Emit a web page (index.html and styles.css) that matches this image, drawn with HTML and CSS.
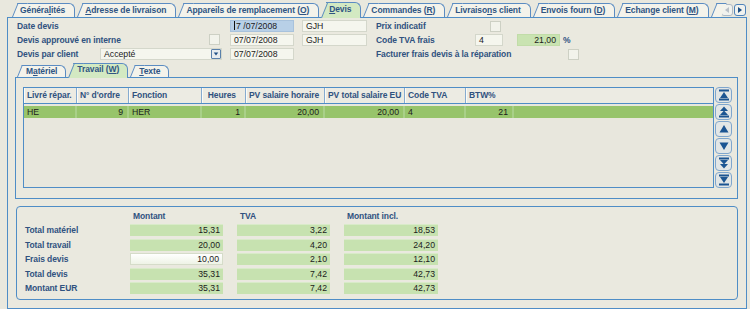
FILE: index.html
```html
<!DOCTYPE html>
<html lang="fr">
<head>
    <meta charset="UTF-8">
    <title>Devis</title>
    <link rel="stylesheet" href="styles.css">
</head>
<body>
<div class="window">
    <div class="tabbar">
        <div class="tab">Généra<u>l</u>ités</div>
        <div class="tab"><u>A</u>dresse de livraison</div>
        <div class="tab">Appareils de remplacement (<u>O</u>)</div>
        <div class="tab active"><u>D</u>evis</div>
        <div class="tab">Commandes (<u>R</u>)</div>
        <div class="tab">Livraiso<u>n</u>s client</div>
        <div class="tab">Envois fourn (<u>D</u>)</div>
        <div class="tab">Echange client (<u>M</u>)</div>
        <div class="tab stub"></div>
        <div class="tabnav">
            <span class="navbtn off"><svg viewBox="0 0 8 8" width="8" height="8"><path d="M6 1 L2 4 L6 7 Z"/></svg></span>
            <span class="navbtn"><svg viewBox="0 0 8 8" width="8" height="8"><path d="M2 1 L6 4 L2 7 Z"/></svg></span>
        </div>
    </div>

    <div class="panel">
        <!-- en-tête du devis -->
        <div class="form">
            <div class="lbl">Date devis</div>
            <div></div>
            <div class="input focus"><span class="caret"></span>7&nbsp;/07/2008</div>
            <div class="input">GJH</div>
            <div class="side">
                <span class="lbl w-prix">Prix indicatif</span>
                <span class="check"></span>
            </div>

            <div class="lbl">Devis approuvé en interne</div>
            <div class="cell-end"><span class="check"></span></div>
            <div class="input">07/07/2008</div>
            <div class="input">GJH</div>
            <div class="side">
                <span class="lbl w-tva">Code TVA frais</span>
                <span class="input w-code">4</span>
                <span class="input green w-rate">21,00</span>
                <span class="unit">%</span>
            </div>

            <div class="lbl">Devis par client</div>
            <div class="select">
                <span>Accepté</span>
                <span class="select-btn"><svg viewBox="0 0 8 8" width="6" height="6"><path d="M1 2 L7 2 L4 6 Z"/></svg></span>
            </div>
            <div class="input">07/07/2008</div>
            <div></div>
            <div class="side">
                <span class="lbl w-fact">Facturer frais devis à la réparation</span>
                <span class="check"></span>
            </div>
        </div>

        <div class="subtabbar">
            <div class="tab small">M<u>a</u>tériel</div>
            <div class="tab small active">Travail (<u>W</u>)</div>
            <div class="tab small"><u>T</u>exte</div>
        </div>

        <div class="subpanel">
            <div class="list">
                <div class="list-head">
                    <div>Livré répar.</div>
                    <div>N° d'ordre</div>
                    <div>Fonction</div>
                    <div class="r">Heures</div>
                    <div>PV salaire horaire</div>
                    <div>PV total salaire EU</div>
                    <div>Code TVA</div>
                    <div class="wide">BTW%</div>
                </div>
                <div class="list-row">
                    <div>HE</div>
                    <div class="r">9</div>
                    <div>HER</div>
                    <div class="r">1</div>
                    <div class="r">20,00</div>
                    <div class="r">20,00</div>
                    <div>4</div>
                    <div class="r">21</div>
                    <div></div>
                </div>
            </div>
            <div class="scroller">
                <span class="sbtn"><svg viewBox="0 0 12 12" width="12" height="12"><rect x="1" y="0.5" width="10" height="2"/><path d="M6 3 L10 9 L2 9 Z"/><rect x="1" y="9.5" width="10" height="2"/></svg></span>
                <span class="sbtn"><svg viewBox="0 0 12 12" width="12" height="12"><path d="M6 0.5 L10 5 L2 5 Z"/><path d="M6 4.5 L10 9 L2 9 Z"/><rect x="1" y="9.5" width="10" height="2"/></svg></span>
                <span class="sbtn"><svg viewBox="0 0 12 12" width="12" height="12"><path d="M6 2 L10.5 9.5 L1.5 9.5 Z"/></svg></span>
                <span class="sbtn"><svg viewBox="0 0 12 12" width="12" height="12"><path d="M1.5 2.5 L10.5 2.5 L6 10 Z"/></svg></span>
                <span class="sbtn"><svg viewBox="0 0 12 12" width="12" height="12"><rect x="1" y="0.5" width="10" height="2"/><path d="M2 3 L10 3 L6 7.5 Z"/><path d="M2 7 L10 7 L6 11.5 Z"/></svg></span>
                <span class="sbtn"><svg viewBox="0 0 12 12" width="12" height="12"><rect x="1" y="0.5" width="10" height="2"/><path d="M2 3 L10 3 L6 9 Z"/><rect x="1" y="9.5" width="10" height="2"/></svg></span>
            </div>
        </div>

        <!-- totaux -->
        <div class="totals">
            <div></div>
            <div class="col-head">Montant</div>
            <div class="col-head">TVA</div>
            <div class="col-head">Montant incl.</div>

            <div class="lbl">Total matériel</div>
            <div class="amount">15,31</div>
            <div class="amount">3,22</div>
            <div class="amount">18,53</div>

            <div class="lbl">Total travail</div>
            <div class="amount">20,00</div>
            <div class="amount">4,20</div>
            <div class="amount">24,20</div>

            <div class="lbl">Frais devis</div>
            <div class="amount edit">10,00</div>
            <div class="amount">2,10</div>
            <div class="amount">12,10</div>

            <div class="lbl">Total devis</div>
            <div class="amount">35,31</div>
            <div class="amount">7,42</div>
            <div class="amount">42,73</div>

            <div class="lbl">Montant EUR</div>
            <div class="amount">35,31</div>
            <div class="amount">7,42</div>
            <div class="amount">42,73</div>
        </div>
    </div>
</div>
</body>
</html>
```

FILE: styles.css
```css
* {
    margin: 0;
    padding: 0;
    box-sizing: border-box;
}

body {
    background-color: #e9e8de;
    font-family: "Liberation Sans", Arial, sans-serif;
    font-size: 8.7px;
    color: #1b1b1b;
    overflow: hidden;
}

.window {
    width: 750px;
    height: 309px;
    padding-top: 2px;
}

u {
    text-underline-offset: 1px;
}

/* onglets */
.tabbar {
    display: flex;
    align-items: flex-start;
    height: 16px;
    margin-bottom: -1px;
    padding: 0 4px 0 12px;
    position: relative;
    z-index: 1;
}

.tab {
    position: relative;
    z-index: 0;
    height: 14px;
    margin-top: 1px;
    margin-right: 2px;
    padding: 0 10px 0 8px;
    line-height: 14px;
    font-size: 8.5px;
    font-weight: bold;
    letter-spacing: -0.1px;
    color: #2f5583;
    white-space: nowrap;
}

.tab::before {
    content: "";
    position: absolute;
    z-index: -1;
    top: 0;
    bottom: 0;
    left: 5px;
    right: 0;
    background: #f4f3eb;
    border: 1px solid #5b8cc2;
    border-left: none;
    border-bottom: none;
    border-radius: 0 6px 0 0;
}

.tab::after {
    content: "";
    position: absolute;
    z-index: -1;
    top: 0;
    bottom: 0;
    left: 0;
    width: 9px;
    background: #f4f3eb;
    border-left: 1px solid #5b8cc2;
    border-top: 1px solid #5b8cc2;
    transform: skewX(-22deg);
    transform-origin: 0 100%;
}

.tab.active {
    height: 16px;
    margin-top: 0;
    line-height: 15px;
}

.tab.active::before,
.tab.active::after {
    background: #d3e9c2;
}

.tab.stub {
    width: 12px;
    padding: 0;
    margin-right: 0;
}

.tabnav {
    display: flex;
    gap: 1px;
    margin-left: auto;
    margin-top: 2px;
}

.navbtn {
    display: flex;
    align-items: center;
    justify-content: center;
    width: 12px;
    height: 12px;
    border: 1px solid #4f83ba;
    border-radius: 3px;
    background: #f1f2ee;
    fill: #1d4f86;
}

.navbtn.off {
    border-color: #aeb9c4;
    fill: #b9c0c7;
}

/* panneau principal */
.panel {
    height: 292px;
    margin: 0 3px 0 7px;
    border: 1px solid #4f8dc6;
    background: #eae9df;
}

.lbl {
    font-size: 8.5px;
    font-weight: bold;
    letter-spacing: -0.1px;
    color: #30527f;
    line-height: 12px;
    white-space: nowrap;
}

.form {
    display: grid;
    grid-template-columns: 75px 122px 64px 65px 1fr;
    grid-template-rows: repeat(3, 12px);
    column-gap: 8px;
    row-gap: 2px;
    padding: 2px 0 0 9px;
}

.input {
    display: block;
    height: 12px;
    padding: 0 3px;
    background: #f5f6ee;
    border: 1px solid #d4d7cb;
    line-height: 10px;
    white-space: nowrap;
}

.input.focus {
    background: #b8d0e7;
    border-color: #a8c2dc;
}

.caret {
    display: inline-block;
    width: 1px;
    height: 9px;
    margin-right: 1px;
    vertical-align: -1px;
    background: #111;
}

.input.green {
    background: #c9e3b1;
    border-color: #c1dca8;
    text-align: right;
}

.check {
    display: block;
    width: 11px;
    height: 11px;
    background: #f2f3eb;
    border: 1px solid #cdd0c4;
}

.cell-end {
    display: flex;
    justify-content: flex-end;
    padding-right: 2px;
}

.select {
    display: flex;
    align-items: center;
    justify-content: space-between;
    height: 12px;
    padding: 0 0 0 3px;
    background: #f5f6ee;
    border: 1px solid #d4d7cb;
}

.select-btn {
    display: flex;
    align-items: center;
    justify-content: center;
    width: 10px;
    height: 10px;
    border: 1px solid #5a80ab;
    border-radius: 1px;
    background: #e7ecef;
    fill: #1f4f85;
}

.side {
    display: flex;
    align-items: center;
    margin-left: 1px;
}

.w-prix { width: 114px; }
.w-tva { width: 99px; }
.w-fact { width: 192px; }
.w-code { width: 28px; }
.w-rate { width: 43px; margin-left: 14px; }

.unit {
    margin-left: 3px;
    color: #30527f;
    font-weight: bold;
    font-size: 8.5px;
}

/* sous-onglets */
.subtabbar {
    display: flex;
    align-items: flex-start;
    height: 15px;
    margin-top: 3px;
    margin-bottom: -1px;
    padding-left: 9px;
    position: relative;
    z-index: 1;
}

.tab.small {
    height: 12px;
    margin-top: 2px;
    margin-right: 2px;
    padding: 0 9px 0 9px;
    line-height: 12px;
}

.tab.small.active {
    height: 15px;
    margin-top: 0;
    line-height: 12px;
}

.subpanel {
    display: flex;
    height: 122px;
    margin: 0 8px 0 7px;
    padding: 9px 0 0 7px;
    border: 1px solid #4f8dc6;
}

.list {
    width: 691px;
    height: 101px;
    border: 1px solid #4f8dc6;
    background: #e8e7dd;
}

.list-head,
.list-row {
    display: grid;
    grid-template-columns: 53px 52px 73px 44px 79px 80px 61px 48px 1fr;
}

.list-head {
    height: 16px;
    border-bottom: 1px solid #4f8dc6;
    background: #ecebe3;
}

.list-head div {
    padding: 0 3px;
    line-height: 15px;
    font-size: 8.5px;
    font-weight: bold;
    letter-spacing: -0.1px;
    color: #30527f;
    white-space: nowrap;
    border-right: 1px solid #86abd0;
    box-shadow: inset 1px 0 #fbfbf7;
}

.list-head .r {
    text-align: right;
    padding-right: 9px;
}

.list-head .wide {
    grid-column: span 2;
    border-right: none;
}

.list-row {
    height: 12px;
    margin-top: 2px;
    background: #97c46b;
}

.list-row div {
    padding: 0 4px 0 3px;
    line-height: 12px;
    white-space: nowrap;
    border-right: 2px solid #a9d088;
}

.list-row div:last-child {
    border-right: none;
}

.list-row .r {
    text-align: right;
}

.scroller {
    display: flex;
    flex-direction: column;
    gap: 1px;
    margin-left: 1px;
}

.sbtn {
    display: flex;
    align-items: center;
    justify-content: center;
    width: 17px;
    height: 16px;
    border: 1px solid #7fa6cd;
    border-radius: 4px;
    background: #e2e6e6;
    fill: #1c5592;
}

/* totaux */
.totals {
    display: grid;
    grid-template-columns: 91px 93px 93px 94px;
    grid-template-rows: 12px repeat(5, 12px);
    column-gap: 14px;
    row-gap: 2.4px;
    height: 94px;
    margin: 7px 8px 0 8px;
    padding: 3px 0 0 8px;
    border: 1px solid #4f8dc6;
    border-radius: 4px;
}

.col-head {
    padding-left: 3px;
    font-size: 8.5px;
    font-weight: bold;
    letter-spacing: -0.1px;
    color: #30527f;
    line-height: 12px;
}

.amount {
    height: 12px;
    padding-right: 3px;
    text-align: right;
    line-height: 11px;
    background: #c7e2b0;
    border-top: 1px solid #d9ebc9;
}

.amount.edit {
    background: linear-gradient(#ffffff, #eef3e6);
    border: 1px solid #d5dcc9;
    line-height: 10px;
}
```
